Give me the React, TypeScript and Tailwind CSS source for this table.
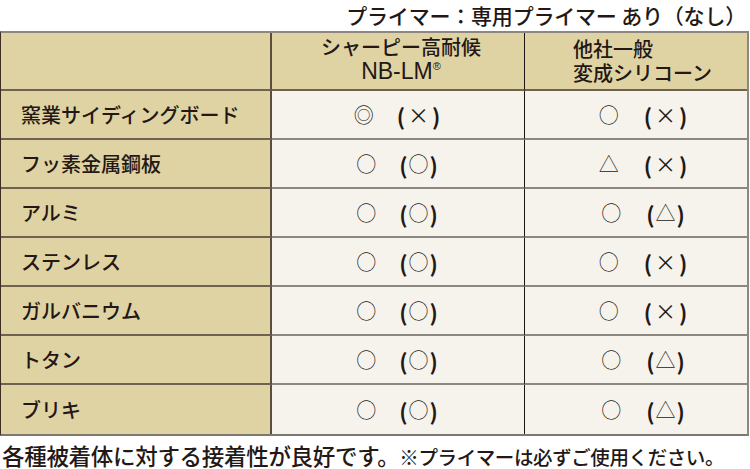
import React from "react";

type Row = { name: string; a: [string, string]; b: [string, string] };

const rows: Row[] = [
  { name: "窯業サイディングボード", a: ["◎", "×"], b: ["○", "×"] },
  { name: "フッ素金属鋼板", a: ["○", "○"], b: ["△", "×"] },
  { name: "アルミ", a: ["○", "○"], b: ["○", "△"] },
  { name: "ステンレス", a: ["○", "○"], b: ["○", "×"] },
  { name: "ガルバニウム", a: ["○", "○"], b: ["○", "×"] },
  { name: "トタン", a: ["○", "○"], b: ["○", "△"] },
  { name: "ブリキ", a: ["○", "○"], b: ["○", "△"] },
];

const font = { fontFamily: '"Noto Sans CJK JP", "Noto Sans", sans-serif' };

function Mark({ v, gap }: { v: [string, string]; gap: string }) {
  const cross = v[1] === "×";
  return (
    <div className={`flex items-center justify-center ${gap} text-[#231815]`}>
      <span className="text-[20px] font-light leading-none">{v[0]}</span>
      <span className="flex items-center leading-none">
        <span className="text-[22px] font-semibold">(</span>
        <span
          className={
            cross
              ? "mx-[3px] text-[21px] font-normal"
              : "mx-[1px] text-[20px] font-light"
          }
        >
          {v[1]}
        </span>
        <span className="text-[22px] font-semibold">)</span>
      </span>
    </div>
  );
}

export default function App() {
  return (
    <div className="h-[469px] w-[750px] overflow-hidden bg-white text-[#231815]" style={font}>
      <div className="flex h-[31px] items-center justify-end pr-[4px] text-[21px] font-medium leading-none tracking-[-0.2px]">
        プライマー：専用プライマー あり（なし）
      </div>
      <div className="grid w-[749px] grid-cols-[271px_253px_1fr] border-l border-r-2 border-t-2 border-b-2 border-l-[#3a2e26] border-r-[#8c8780] border-t-[#8c8780] border-b-[#7d7870]">
        <div className="h-[58px] border-r-2 border-b-2 border-r-[#5a4e3e] border-b-[#6e6353] bg-[#e0d3a3]" />
        <div className="flex h-[58px] flex-col items-center justify-center border-r border-b-2 border-r-[#1e1414] border-b-[#6e6353] bg-[#e0d3a3] pl-[6px] text-[20px] font-medium">
          <span className="leading-[24px]">シャーピー高耐候</span>
          <span
            className="text-[23px] leading-[24px]"
            style={{ fontFamily: '"Liberation Sans", "Noto Sans CJK JP", sans-serif' }}
          >
            NB-LM
            <span className="relative -top-[9px] text-[11px]">®</span>
          </span>
        </div>
        <div className="flex h-[58px] flex-col items-start justify-center border-b-2 border-b-[#6e6353] bg-[#e0d3a3] pl-[48px] text-[20px] font-medium">
          <span className="leading-[24px]">他社一般</span>
          <span className="leading-[24px]">変成シリコーン</span>
        </div>
        {rows.map((r, i) => {
          const last = i === rows.length - 1;
          return (
            <React.Fragment key={r.name}>
              <div
                className={`flex h-[49px] items-center border-r-2 border-r-[#5a4e3e] bg-[#e0d3a3] pl-[20px] text-[20px] font-medium ${last ? "" : "border-b-2 border-b-[#6e6353]"}`}
              >
                {r.name}
              </div>
              <div
                className={`flex h-[49px] items-center justify-center border-r border-r-[#1e1414] bg-[#f6f3ec] pr-[2px] ${last ? "" : "border-b-2 border-b-[#8c8780]"}`}
              >
                <Mark v={r.a} gap="gap-[23px]" />
              </div>
              <div
                className={`flex h-[49px] items-center justify-center bg-[#f6f3ec] pl-[14px] ${last ? "" : "border-b-2 border-b-[#8c8780]"}`}
              >
                <Mark v={r.b} gap="gap-[25px]" />
              </div>
            </React.Fragment>
          );
        })}
      </div>
      <div className="flex items-baseline pl-[2px] pt-[5px] leading-[28px]">
        <span className="text-[22.5px] font-medium tracking-[-0.3px]">各種被着体に対する接着性が良好です。</span>
        <span className="text-[19.5px] font-medium tracking-[-0.4px]">※プライマーは必ずご使用ください。</span>
      </div>
    </div>
  );
}
